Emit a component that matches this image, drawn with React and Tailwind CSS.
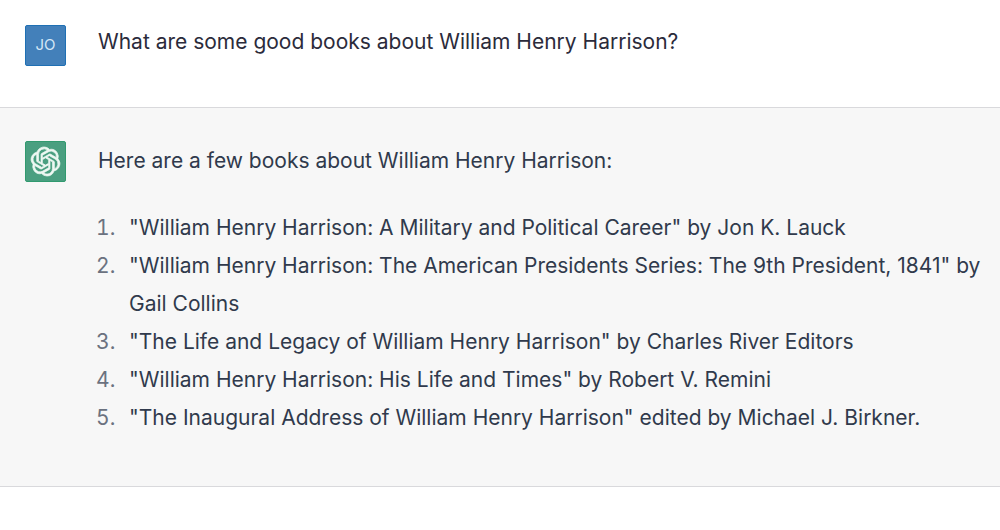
import { SiOpenai } from 'react-icons/si';

const books = [
  '"William Henry Harrison: A Military and Political Career" by Jon K. Lauck',
  '"William Henry Harrison: The American Presidents Series: The 9th President, 1841" by Gail Collins',
  '"The Life and Legacy of William Henry Harrison" by Charles River Editors',
  '"William Henry Harrison: His Life and Times" by Robert V. Remini',
  '"The Inaugural Address of William Henry Harrison" edited by Michael J. Birkner.',
];

const Avatar = ({ className, children }) => (
  <div className={`flex h-[41px] w-[41px] shrink-0 items-center justify-center rounded-xs ${className}`}>
    {children}
  </div>
);

const App = () => {
  return (
    <main className="bg-white font-['Inter','Liberation_Sans',sans-serif] text-[21px]">
      {/* User message */}
      <section className="flex gap-8 border-b border-[#d9d9dc] pt-[25px] pr-3 pb-[41px] pl-[25px] text-[#2b2b3b]">
        <Avatar className="border border-[#1f70b4] bg-[#4380ba] text-[15px] text-[#d3e6f6]">JO</Avatar>
        <p className="leading-[34px]">What are some good books about William Henry Harrison?</p>
      </section>

      {/* Assistant reply */}
      <section className="flex gap-8 border-b border-[#d9d9dc] bg-[#f7f7f7] pt-[33px] pr-3 pb-[49px] pl-[25px] text-[#303a4c]">
        <Avatar className="border border-[#319a6f] bg-[#4a9f80] text-[#eef8f3]">
          <SiOpenai className="h-[29px] w-[29px] overflow-visible stroke-current stroke-[0.6]" />
        </Avatar>
        <div>
          <p className="leading-10">Here are a few books about William Henry Harrison:</p>
          <ol className="mt-7 list-decimal pl-[23px] leading-[38px] marker:text-[#6b7280]">
            {books.map((book) => (
              <li key={book} className="pl-2">{book}</li>
            ))}
          </ol>
        </div>
      </section>
    </main>
  );
};

export default App;
